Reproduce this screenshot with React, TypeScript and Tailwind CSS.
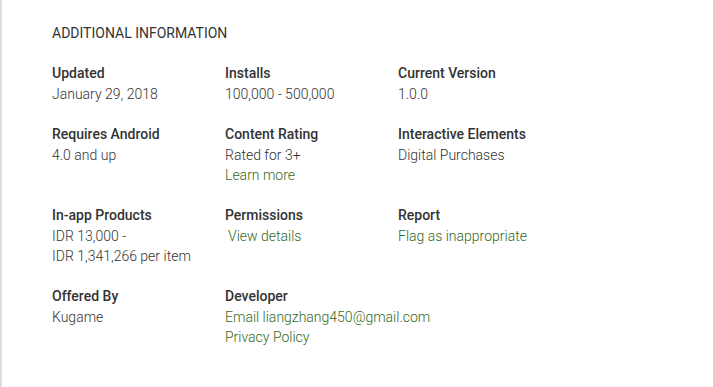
import React from 'react';

type Line = { text: string; link?: boolean; indent?: boolean };
type Item = { label: string; lines: Line[] };

const ROWS: Item[][] = [
    [
        { label: 'Updated', lines: [{ text: 'January 29, 2018' }] },
        { label: 'Installs', lines: [{ text: '100,000 - 500,000' }] },
        { label: 'Current Version', lines: [{ text: '1.0.0' }] },
    ],
    [
        { label: 'Requires Android', lines: [{ text: '4.0 and up' }] },
        { label: 'Content Rating', lines: [{ text: 'Rated for 3+' }, { text: 'Learn more', link: true }] },
        { label: 'Interactive Elements', lines: [{ text: 'Digital Purchases' }] },
    ],
    [
        { label: 'In-app Products', lines: [{ text: 'IDR 13,000 -' }, { text: 'IDR 1,341,266 per item' }] },
        { label: 'Permissions', lines: [{ text: 'View details', link: true, indent: true }] },
        { label: 'Report', lines: [{ text: 'Flag as inappropriate', link: true }] },
    ],
    [
        { label: 'Offered By', lines: [{ text: 'Kugame' }] },
        { label: 'Developer', lines: [{ text: 'Email liangzhang450@gmail.com', link: true }, { text: 'Privacy Policy', link: true }] },
    ],
];

const InfoCell: React.FC<{ item: Item }> = ({ item }) => (
    <div className="flex flex-col">
        <div className="text-[14px] leading-[20px] font-medium text-[#333] mb-px">{item.label}</div>
        {item.lines.map(l => (
            <div
                key={l.text}
                className={`text-[14px] leading-[20px] font-light whitespace-nowrap ${l.link ? 'text-[#33691e]' : 'text-[#333]'} ${l.indent ? 'pl-[3px]' : ''}`}
            >
                {l.text}
            </div>
        ))}
    </div>
);

export default function App() {
    return (
        <div className="w-[713px] h-[387px] bg-white border-l-2 border-[#dcdcdc] overflow-hidden" style={{ fontFamily: 'Roboto, "Liberation Sans", sans-serif' }}>
            <div className="pl-[50px] pt-[23px]">
                <h2 className="text-[14px] leading-[20px] font-normal text-[#333] uppercase mb-[20px]">Additional Information</h2>
                <div className="flex flex-col gap-[20px]">
                    {ROWS.map((row, i) => (
                        <div key={i} className="grid grid-cols-[173px_173px_173px]">
                            {row.map(item => <InfoCell key={item.label} item={item} />)}
                        </div>
                    ))}
                </div>
            </div>
        </div>
    );
}
